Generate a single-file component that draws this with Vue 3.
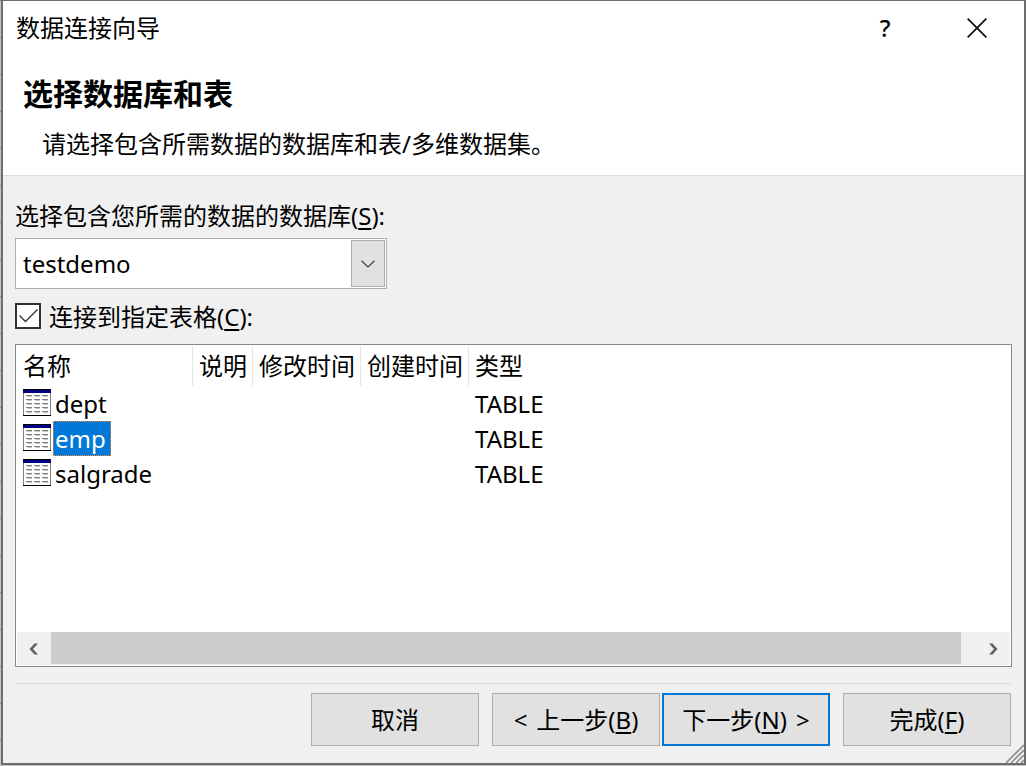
<script setup>
import { ref } from 'vue'

const databases = ['testdemo']
const database = ref('testdemo')
const connectTable = ref(true)
const selected = ref('emp')

const columns = [
  { label: '名称', cls: 'col-name' },
  { label: '说明', cls: 'col-note' },
  { label: '修改时间', cls: 'col-time' },
  { label: '创建时间', cls: 'col-time' },
  { label: '类型', cls: 'col-type' },
]
const tables = [
  { name: 'dept', type: 'TABLE' },
  { name: 'emp', type: 'TABLE' },
  { name: 'salgrade', type: 'TABLE' },
]
const iconRows = [6, 10, 14, 18, 22]
const iconCols = [3, 11, 19]
</script>

<template>
  <div class="backdrop">
    <main class="dialog">
      <header class="top">
        <div class="titlebar">
          <span class="caption">数据连接向导</span>
          <button class="caption-btn help" type="button">?</button>
          <button class="caption-btn" type="button" aria-label="关闭">
            <svg width="20" height="20" viewBox="0 0 20 20">
              <path d="M0.7 0.7L19.3 19.3M19.3 0.7L0.7 19.3" stroke="#111" stroke-width="1.8" fill="none" />
            </svg>
          </button>
        </div>
        <h1>选择数据库和表</h1>
        <p>请选择包含所需数据的数据库和表/多维数据集。</p>
      </header>

      <section class="body">
        <label class="field-label" for="database">选择包含您所需的数据的数据库(<u>S</u>):</label>
        <div class="combo">
          <select id="database" v-model="database">
            <option v-for="d in databases" :key="d">{{ d }}</option>
          </select>
          <span class="drop">
            <svg width="14" height="8" viewBox="0 0 14 8">
              <path d="M0.5 0.7L7 7L13.5 0.7" fill="none" stroke="#404040" stroke-width="1.2" />
            </svg>
          </span>
        </div>

        <label class="check">
          <input v-model="connectTable" type="checkbox" />
          <svg class="tick" width="26" height="26" viewBox="0 0 26 26">
            <path v-if="connectTable" d="M4.5 12.5L10.5 18.5L22.5 6.5" fill="none" stroke="#333" stroke-width="1.4" />
          </svg>
          <span>连接到指定表格(<u>C</u>):</span>
        </label>

        <div class="list">
          <table>
            <thead>
              <tr>
                <th v-for="c in columns" :key="c.label" :class="c.cls" scope="col">{{ c.label }}</th>
              </tr>
            </thead>
            <tbody>
              <tr v-for="t in tables" :key="t.name" @click="selected = t.name">
                <td>
                  <div class="item">
                    <svg width="28" height="27" viewBox="0 0 28 27" shape-rendering="crispEdges">
                      <rect width="28" height="27" fill="#808080" />
                      <rect x="1" y="4" width="26" height="22" fill="#fff" />
                      <rect width="28" height="1" fill="#000" />
                      <rect y="1" width="28" height="3" fill="#000080" />
                      <rect y="26" width="28" height="1" fill="#000" />
                      <template v-for="y in iconRows" :key="y">
                        <template v-for="x in iconCols" :key="x">
                          <rect :x="x" :y="y" width="6" height="1" fill="#808080" />
                          <rect :x="x + 1" :y="y + 1" width="5" height="1" fill="#c8c8c8" />
                        </template>
                      </template>
                    </svg>
                    <span class="name" :class="{ selected: selected === t.name }">{{ t.name }}</span>
                  </div>
                </td>
                <td></td>
                <td></td>
                <td></td>
                <td class="type">{{ t.type }}</td>
              </tr>
            </tbody>
          </table>
          <div class="scrollbar">
            <button type="button" aria-label="向左滚动">
              <svg width="10" height="12" viewBox="0 0 10 12">
                <path d="M5.5 0.5H9L4 6L9 11.5H5.5L0.5 6Z" fill="#606060" />
              </svg>
            </button>
            <div class="track"><div class="thumb"></div></div>
            <button type="button" aria-label="向右滚动">
              <svg width="10" height="12" viewBox="0 0 10 12">
                <path d="M4.5 0.5H1L6 6L1 11.5H4.5L9.5 6Z" fill="#606060" />
              </svg>
            </button>
          </div>
        </div>

        <footer>
          <button class="push" type="button">取消</button>
          <div class="pair">
            <button class="push" type="button"><span>&lt;</span><span>上一步(<u>B</u>)</span></button>
            <button class="push default" type="button"><span>下一步(<u>N</u>)</span><span>&gt;</span></button>
          </div>
          <button class="push" type="button"><span>完成(<u>F</u>)</span></button>
        </footer>
      </section>

      <svg class="grip" width="20" height="20" viewBox="0 0 20 20">
        <path d="M0 20L20 0V20Z" fill="#fff" />
        <path d="M2 20L20 2M7 20L20 7M12 20L20 12M17 20L20 17" stroke="#999" stroke-width="2" />
      </svg>
    </main>
  </div>
</template>

<style>
body {
  margin: 0;
}
</style>

<style scoped>
* {
  box-sizing: border-box;
}
.backdrop {
  display: flex;
  min-height: 100vh;
  padding: 0 0 1px 1px;
  background:
    repeating-linear-gradient(to bottom, #8c8c8c 0 1px, transparent 1px 37px),
    #c4c4c4;
  font-family: "Noto Sans", "Noto Sans CJK SC", sans-serif;
  font-size: 24px;
  line-height: 36px;
  color: #000;
}
.dialog {
  position: relative;
  flex: 1;
  display: flex;
  flex-direction: column;
  border: 2px solid #6d6d6d;
  border-top-width: 1px;
  background: #f0f0f0;
}
button,
select {
  font: inherit;
  color: inherit;
}
u {
  text-decoration-thickness: 2px;
  text-underline-offset: 3px;
}
.top {
  height: 175px;
  background: #fff;
  border-bottom: 1px solid #dcdcdc;
}
.titlebar {
  display: flex;
  align-items: center;
  height: 54px;
  padding: 0 1px 0 13px;
}
.caption {
  flex: 1;
}
.caption-btn {
  display: flex;
  align-items: center;
  justify-content: center;
  width: 92px;
  height: 54px;
  padding: 0;
  border: 0;
  background: none;
}
.help {
  font-weight: 500;
}
h1 {
  margin: 17px 0 0 20px;
  font-size: 30px;
  line-height: 44px;
  font-weight: 700;
}
p {
  margin: 10px 0 0 39px;
}
.body {
  flex: 1;
  display: flex;
  flex-direction: column;
  padding: 22px 12px 17px;
}
.field-label {
  align-self: flex-start;
}
.combo {
  position: relative;
  width: 372px;
  height: 51px;
  margin-top: 4px;
}
.combo select {
  width: 100%;
  height: 100%;
  padding: 0 40px 0 7px;
  border: 1px solid #adadb3;
  border-radius: 0;
  background: #fff;
  appearance: none;
}
.drop {
  position: absolute;
  top: 2px;
  right: 2px;
  bottom: 2px;
  width: 34px;
  display: flex;
  align-items: center;
  justify-content: center;
  border: 1px solid #adadad;
  background: #e1e1e1;
  pointer-events: none;
}
.check {
  position: relative;
  align-self: flex-start;
  display: flex;
  align-items: flex-start;
  gap: 8px;
  margin-top: 10px;
}
.check input {
  width: 26px;
  height: 26px;
  margin: 4px 0 0;
  border: 2px solid #333;
  background: #fff;
  appearance: none;
}
.tick {
  position: absolute;
  left: 0;
  top: 4px;
  pointer-events: none;
}
.list {
  flex: 1;
  display: flex;
  flex-direction: column;
  justify-content: space-between;
  margin-top: 9px;
  padding: 1px;
  border: 1px solid #828790;
  background: #fff;
}
table {
  width: 100%;
  table-layout: fixed;
  border-collapse: separate;
  border-spacing: 0;
}
th {
  height: 40px;
  padding: 0 0 0 6px;
  border-right: 1px solid #e5e5e5;
  font-weight: 400;
  text-align: left;
  white-space: nowrap;
}
th:last-child {
  border-right: 0;
}
.col-name {
  width: 176px;
}
.col-note {
  width: 60px;
}
.col-time {
  width: 108px;
}
td {
  height: 35px;
  padding: 0;
  line-height: 35px;
}
.item {
  display: flex;
  align-items: flex-start;
  padding-left: 6px;
  gap: 2px;
}
.item svg {
  margin-top: 3px;
}
.name {
  padding: 0 5px 0 2px;
}
.name.selected {
  background: #0078d7;
  color: #fff;
  outline: 1px dotted #ff8728;
  outline-offset: -1px;
}
.type {
  padding-left: 6px;
}
.scrollbar {
  display: flex;
  height: 33px;
  background: #f0f0f0;
}
.scrollbar button {
  display: flex;
  align-items: center;
  justify-content: center;
  width: 34px;
  padding: 0;
  border: 0;
  background: none;
}
.track {
  flex: 1;
  padding: 0 15px 1px 0;
}
.thumb {
  height: 100%;
  background: #cdcdcd;
}
footer {
  display: flex;
  justify-content: flex-end;
  gap: 13px;
  margin-top: 16px;
  padding: 9px 1px 0 0;
  border-top: 1px solid #dcdcdc;
}
.pair {
  display: flex;
  gap: 2px;
}
.push {
  display: flex;
  align-items: center;
  justify-content: center;
  gap: 9px;
  width: 168px;
  height: 53px;
  padding: 0;
  border: 1px solid #adadad;
  background: #e1e1e1;
  white-space: nowrap;
}
.push.default {
  border: 2px solid #0078d7;
}
.grip {
  position: absolute;
  right: 0;
  bottom: 0;
}
</style>
